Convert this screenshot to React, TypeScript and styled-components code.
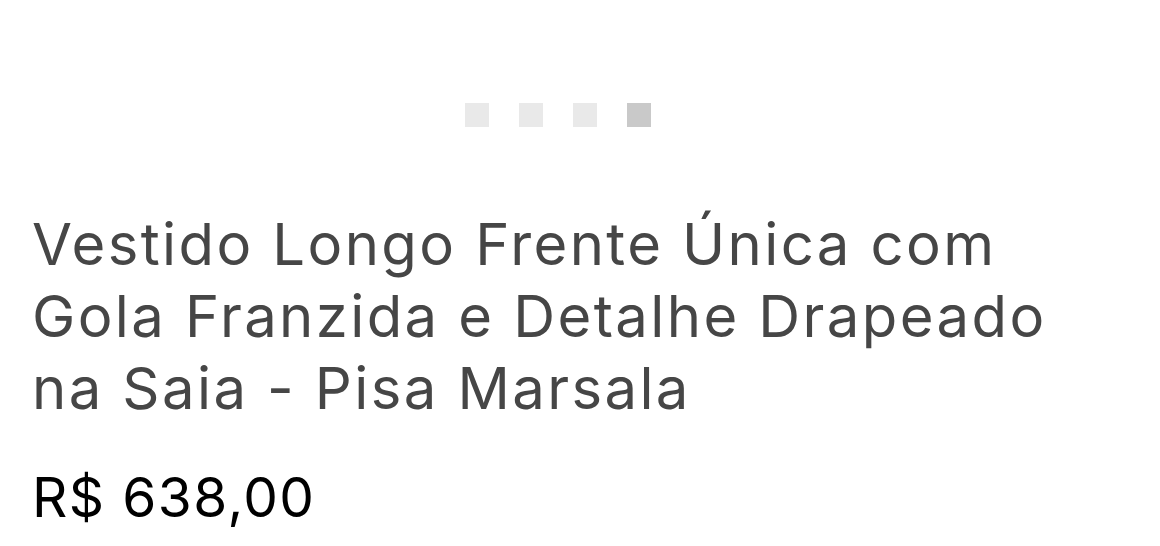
import React from "react";
import styled, { createGlobalStyle } from "styled-components";

const Global = createGlobalStyle`
  html, body { margin: 0; background: #fff; }
`;

const Page = styled.main`
  box-sizing: border-box;
  width: 1160px;
  height: 546px;
  padding: 103px 76px 0 32px;
  display: flex;
  flex-direction: column;
  overflow: hidden;
`;

const Pager = styled.div`
  display: flex;
  justify-content: center;
  gap: 30px;
`;

const Dot = styled.span<{ $active?: boolean }>`
  width: 24px;
  height: 24px;
  background: ${(p) => (p.$active ? "#c9c9c9" : "#e9e9e9")};
`;

const Title = styled.h1`
  margin: 81px 0 0;
  font-family: Inter, "Noto Sans", sans-serif;
  font-weight: 400;
  font-size: 58px;
  line-height: 72px;
  letter-spacing: 2.4px;
  color: #464646;
  white-space: nowrap;
`;

const Price = styled.div`
  margin-top: 43px;
  font-family: Inter, Roboto, sans-serif;
  font-weight: 400;
  font-size: 55px;
  line-height: 60px;
  letter-spacing: 1.4px;
  color: #000;
`;

const slides = [false, false, false, true];

export default function App() {
  return (
    <>
      <Global />
      <Page>
        <Pager>
          {slides.map((active, i) => (
            <Dot key={i} $active={active} />
          ))}
        </Pager>
        <Title>
          Vestido Longo Frente Única com
          <br />
          Gola Franzida e Detalhe Drapeado
          <br />
          na Saia - Pisa Marsala
        </Title>
        <Price>R$ 638,00</Price>
      </Page>
    </>
  );
}
